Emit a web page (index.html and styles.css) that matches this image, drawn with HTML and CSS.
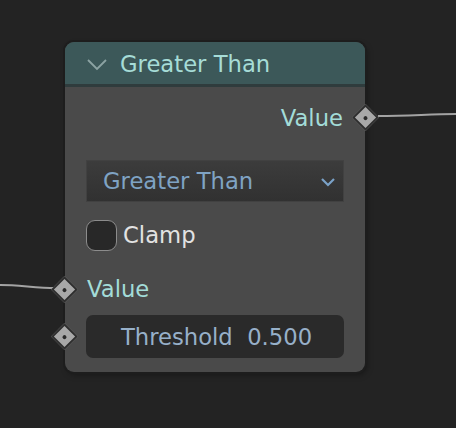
FILE: index.html
```html
<!DOCTYPE html>
<html>
<head>
<meta charset="utf-8">
<link rel="stylesheet" href="styles.css">
</head>
<body>
<div class="canvas">
  <svg class="links" width="456" height="428" viewBox="0 0 456 428">
    <path d="M378 116 C 410 116, 430 114, 456 114" />
    <path d="M0 285 C 20 285, 35 288, 56 288" />
  </svg>
  <div class="node">
    <div class="header">
      <svg class="hchev" width="22" height="14" viewBox="0 0 22 14"><path d="M2 2 L11 11 L20 2" /></svg>
      <span class="title">Greater Than</span>
    </div>
    <div class="body">
      <div class="row row-out">
        <span class="sock-label">Value</span>
        <span class="socket socket-right"></span>
      </div>
      <div class="dropdown">
        <span>Greater Than</span>
        <svg class="dchev" width="16" height="10" viewBox="0 0 16 10"><path d="M2 2 L8 8 L14 2" /></svg>
      </div>
      <div class="check-row">
        <span class="checkbox"></span>
        <span class="check-label">Clamp</span>
      </div>
      <div class="row row-in">
        <span class="socket socket-left"></span>
        <span class="sock-label">Value</span>
      </div>
      <div class="field">
        <span class="socket socket-left"></span>
        <span class="field-text">Threshold  0.500</span>
      </div>
    </div>
  </div>
</div>
</body>
</html>
```
FILE: styles.css
```css
html, body {
  margin: 0;
  padding: 0;
  background: #232323;
}
body {
  width: 456px;
  height: 428px;
  overflow: hidden;
  font-family: "DejaVu Sans", sans-serif;
  font-size: 22.7px;
}
.canvas {
  position: relative;
  width: 456px;
  height: 428px;
}
.links {
  position: absolute;
  left: 0;
  top: 0;
}
.links path {
  fill: none;
  stroke: #a3a3a3;
  stroke-width: 2;
}
.node {
  position: absolute;
  left: 65px;
  top: 42px;
  width: 300px;
  border-radius: 9px;
  background: #4a4a4a;
  box-shadow: 0 0 0 2px #1d1d1d, 2px 3px 6px rgba(0,0,0,0.35);
  display: flex;
  flex-direction: column;
}
.header {
  height: 41px;
  background: #3c5859;
  border-radius: 9px 9px 0 0;
  border-bottom: 3px solid #2f3c3d;
  display: flex;
  align-items: center;
  padding-left: 21px;
  padding-top: 1px;
}
.hchev {
  margin-top: 2px;
}
.hchev path {
  fill: none;
  stroke: #8ca3a3;
  stroke-width: 1.8;
}
.title {
  color: #a6dcd7;
  margin-left: 12px;
}
.body {
  display: flex;
  flex-direction: column;
  padding: 9px 21px 14px 21px;
}
.row {
  position: relative;
  display: flex;
  align-items: center;
}
.row-out {
  height: 44px;
  justify-content: flex-end;
  padding-right: 1px;
}
.sock-label {
  color: #a3dcd8;
}
.socket {
  position: absolute;
  width: 19px;
  height: 19px;
  box-sizing: border-box;
  background: #a8a8a8;
  border: 2.5px solid #2e2e2e;
  transform: rotate(45deg);
  display: flex;
  align-items: center;
  justify-content: center;
}
.socket::after {
  content: "";
  width: 4px;
  height: 4px;
  border-radius: 2px;
  background: #2a2a2a;
}
.socket-right {
  right: -31px;
  top: 12px;
}
.socket-left {
  left: -31px;
}
.dropdown {
  margin-top: 20px;
  height: 42px;
  box-sizing: border-box;
  border: 1px solid #414141;
  background: linear-gradient(#3c3c3c, #313131);
  display: flex;
  align-items: center;
  justify-content: space-between;
  padding: 0 7px 0 16px;
  color: #7fa3c4;
}
.dchev {
  margin-top: 2px;
}
.dchev path {
  fill: none;
  stroke: #7aa2c8;
  stroke-width: 2.2;
}
.check-row {
  margin-top: 18px;
  height: 30px;
  display: flex;
  align-items: center;
}
.checkbox {
  width: 31px;
  height: 31px;
  box-sizing: border-box;
  border-radius: 9px;
  border: 1px solid #8c8c8c;
  background: #282828;
}
.check-label {
  color: #e2e2e2;
  margin-left: 6px;
}
.row-in {
  margin-top: 21px;
  height: 36px;
  padding-left: 1px;
}
.row-in .socket-left {
  top: 8.5px;
}
.field {
  position: relative;
  margin-top: 8px;
  height: 43px;
  border-radius: 7px;
  background: #2a2a2a;
  display: flex;
  align-items: center;
  justify-content: center;
}
.field .socket-left {
  top: 12px;
}
.field-text {
  white-space: pre;
  color: #97b0c9;
  margin-left: 3px;
}
```
